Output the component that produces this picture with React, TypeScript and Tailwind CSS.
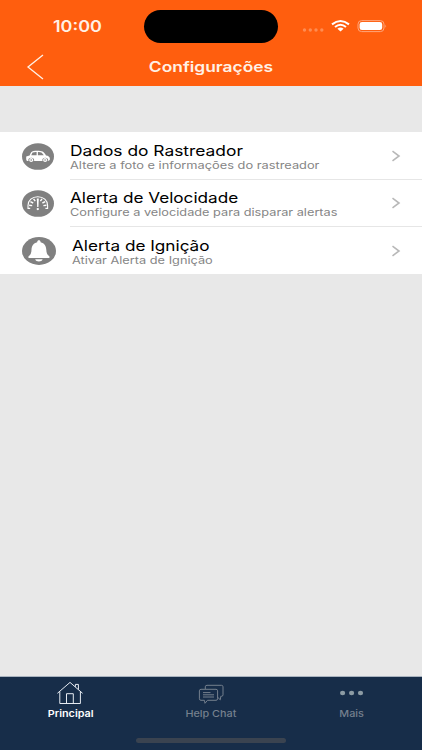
import type { ReactNode } from "react";

interface RowProps {
  title: string;
  subtitle: string;
  icon: ReactNode;
  titleClass: string;
  subtitleClass: string;
  last?: boolean;
}

function CarIcon() {
  return (
    <svg className="w-8 h-[27px]" viewBox="0 0 32 27">
      <ellipse cx="16" cy="13.5" rx="16" ry="13.3" fill="#808080" />
      <path
        d="M4.2 16.6V13.4L7.6 12.4C8.6 10 9.6 8.4 11.4 8.1C14.4 7.6 18.6 7.7 20.6 8.6C22 9.3 23.2 11 24 12.5C26.4 12.8 27.6 13.7 27.8 15.1V17L26.2 17.9H4.9Z"
        fill="#fff"
      />
      <path d="M9.2 12.3L10.6 9.6Q12.2 9 14.6 9.1V12.3ZM15.9 9.1Q18.4 9 19.8 9.7L21.8 12.3H15.9Z" fill="#808080" />
      <path d="M6.2 17.8a3 3 0 0 1 6 0M20.2 17.8a3 3 0 0 1 6 0" fill="#808080" />
      <circle cx="9.2" cy="17" r="2" fill="#fff" />
      <circle cx="23.1" cy="17" r="2" fill="#fff" />
      <circle cx="9.2" cy="17" r="0.8" fill="#808080" />
      <circle cx="23.1" cy="17" r="0.8" fill="#808080" />
    </svg>
  );
}

function GaugeIcon() {
  return (
    <svg className="w-8 h-[27px]" viewBox="0 0 32 27" fill="none">
      <ellipse cx="16" cy="13.5" rx="16" ry="13.3" fill="#808080" />
      <path d="M8.2 18.4H6V15.5C6 10.3 10.2 6.7 15.8 6.7S25.6 10.3 25.6 15.5V18.4H23.4" stroke="#fff" strokeWidth="1.1" />
      <path
        d="M7.2 15.2L10.2 15.6M8.4 11.6L11.2 13M11.6 8.8L13.2 11.2M24.4 15.2L21.4 15.6M23.2 11.6L20.4 13M20 8.8L18.4 11.2"
        stroke="#fff"
        strokeWidth="1.4"
      />
      <path d="M14.8 8.5H16.8L16.4 17H15.2Z" fill="#fff" />
      <ellipse cx="15.8" cy="19.1" rx="1.2" ry="1.1" fill="#fff" />
    </svg>
  );
}

function BellIcon() {
  return (
    <svg className="w-[34px] h-7" viewBox="0 0 34 28">
      <ellipse cx="17" cy="14" rx="17" ry="13.9" fill="#808080" />
      <path
        d="M15.2 5.2C15.2 2.7 18.6 2.7 18.6 5.2C22.4 6.1 24.2 9 24.3 12.8C24.4 16.1 25.2 17.9 27.4 19.2V21.1H6.5V19.2C8.7 17.9 9.4 16.1 9.5 12.8C9.6 9 11.4 6.1 15.2 5.2Z"
        fill="#fff"
      />
      <path d="M13.2 22.3H20.6C20 25.3 13.8 25.3 13.2 22.3Z" fill="#fff" />
    </svg>
  );
}

function Row({ title, subtitle, icon, titleClass, subtitleClass, last }: RowProps) {
  return (
    <div className="flex h-[47.33px] items-center bg-white pl-[22px]">
      <div className="w-12 shrink-0">{icon}</div>
      <div
        className={`flex h-full flex-1 items-center justify-between pr-[21px] ${last ? "" : "border-b border-[#e6e6e6]"}`}
      >
        <div className="flex w-[270px] flex-col items-start pt-[5px]">
          <span className={`origin-left whitespace-nowrap text-[14.3px] leading-4 text-black ${titleClass}`}>{title}</span>
          <span className={`origin-left whitespace-nowrap text-[10.5px] leading-[14px] text-[#858585] ${subtitleClass}`}>
            {subtitle}
          </span>
        </div>
        <svg className="h-3 w-[10px]" viewBox="0 0 10 12" fill="none">
          <path d="M1.5 1.2L8 6L1.5 10.8" stroke="#b8b8b8" strokeWidth="1.6" />
        </svg>
      </div>
    </div>
  );
}

function StatusBar() {
  return (
    <div className="flex h-[52px] items-center">
      <div className="w-[144px] pl-[53px]">
        <span className="inline-block origin-left scale-x-[1.16] text-[15.5px] font-semibold leading-5 text-[#fff1e6]">
          10:00
        </span>
      </div>
      <div className="h-[33px] w-[134px] rounded-[17px] bg-black" />
      <svg className="ml-6 h-4 w-[88px]" viewBox="0 0 88 16">
        <g fill="#ff8c52">
          <circle cx="2.5" cy="12" r="1.7" />
          <circle cx="8.3" cy="12" r="1.7" />
          <circle cx="14" cy="12" r="1.7" />
          <circle cx="19.8" cy="12" r="1.7" />
        </g>
        <g fill="none" stroke="#fff" strokeWidth="2">
          <path d="M30 6.4Q38.5 -0.5 47 6.4" />
          <path d="M33 9Q38.5 4.5 44 9" />
        </g>
        <path d="M35.4 10.8Q38.5 8.4 41.6 10.8L38.5 13.6Z" fill="#fff" />
        <rect x="56" y="2.6" width="26" height="11" rx="3.6" fill="none" stroke="#ffa57b" strokeWidth="1" />
        <rect x="57.6" y="4.1" width="22.6" height="8" rx="2.4" fill="#fff" />
        <path d="M83.4 6.4Q85 8.1 83.4 9.8Z" fill="#ffa57b" />
      </svg>
    </div>
  );
}

function TabBar() {
  return (
    <nav className="h-[74px] border-t border-[#a9b3bf] bg-[#172d49]">
      <div className="grid h-[61px] grid-cols-3 text-[9.3px] leading-3">
        <div className="flex flex-col items-center text-white">
          <svg className="mt-1 h-6 w-7" viewBox="0 0 28 24" fill="none" stroke="#e6ebf2" strokeWidth="1">
            <path d="M1.4 12.3L14 1.4L26.6 12.3" />
            <path d="M3.8 10.5V22.5H24.4V10.5M10.5 22.5V12.7H17.3V22.5M19.4 5.8V3.4H22.4V8.5" />
          </svg>
          <span className="mt-[3px] scale-x-[1.16] font-semibold">Principal</span>
        </div>
        <div className="flex flex-col items-center text-[#75808e]">
          <svg className="mt-1 h-6 w-7" viewBox="0 0 28 24" fill="none" stroke="#75808e" strokeWidth="1">
            <path d="M4 8.3H19Q20.6 8.3 20.6 9.8V17.8Q20.6 19.3 19 19.3H10.5L8 22.3L7.4 19.3H4Q2.4 19.3 2.4 17.8V9.8Q2.4 8.3 4 8.3Z" />
            <path d="M8.3 8V5.8Q8.3 4.3 10 4.3H24.4Q26 4.3 26 5.8V13.8Q26 15.3 24.4 15.3H23.8L23.3 18.8L20.7 16.3M6 11.6H13.5M6 13.8H17M6 16H17" />
          </svg>
          <span className="mt-[3px] scale-x-[1.16] font-medium">Help Chat</span>
        </div>
        <div className="flex flex-col items-center text-[#75808e]">
          <svg className="mt-[5px] h-6 w-7" viewBox="0 0 28 24" fill="#8c9ba4">
            <ellipse cx="4.6" cy="11" rx="2.6" ry="2.2" />
            <ellipse cx="13.6" cy="11" rx="2.6" ry="2.2" />
            <ellipse cx="22.5" cy="11" rx="2.6" ry="2.2" />
          </svg>
          <span className="mt-0.5 scale-x-[1.16] font-medium">Mais</span>
        </div>
      </div>
      <div className="mx-auto h-[5px] w-[150px] rounded-full bg-[#3a4350]" />
    </nav>
  );
}

function App() {
  return (
    <div className="flex h-[750px] w-[422px] flex-col overflow-hidden bg-[#e8e8e8] font-['Inter',sans-serif]">
      <header className="h-[86px] bg-[#ff5e0e]">
        <StatusBar />
        <div className="grid h-[30px] grid-cols-[60px_1fr_60px] items-center">
          <svg className="ml-[26px] h-[26px] w-[19px]" viewBox="0 0 19 26" fill="none">
            <path d="M17 1L2 13L17 25" stroke="#fff1e6" strokeWidth="1.3" />
          </svg>
          <h1 className="scale-x-[1.2] text-center text-[14.5px] font-semibold leading-5 text-[#fff1e6]">Configurações</h1>
        </div>
      </header>

      <main className="flex-1 pt-[46.4px]">
        <Row
          title="Dados do Rastreador"
          subtitle="Altere a foto e informações do rastreador"
          icon={<CarIcon />}
          titleClass="scale-x-[1.215]"
          subtitleClass="scale-x-[1.22]"
        />
        <Row
          title="Alerta de Velocidade"
          subtitle="Configure a velocidade para disparar alertas"
          icon={<GaugeIcon />}
          titleClass="scale-x-[1.2]"
          subtitleClass="scale-x-[1.213]"
        />
        <Row
          title="Alerta de Ignição"
          subtitle="Ativar Alerta de Ignição"
          icon={<BellIcon />}
          titleClass="ml-0.5 scale-x-[1.2]"
          subtitleClass="ml-0.5 scale-x-[1.215]"
          last
        />
      </main>

      <TabBar />
    </div>
  );
}

export default App;
